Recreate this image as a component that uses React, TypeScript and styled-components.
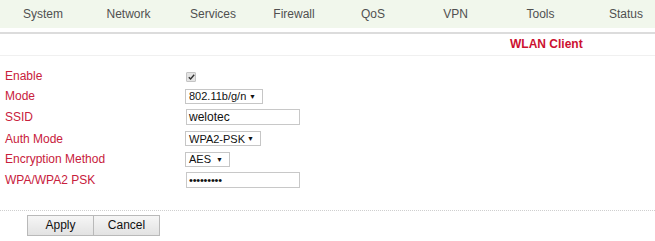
import React from 'react'
import styled, { createGlobalStyle } from 'styled-components'

const Global = createGlobalStyle`
  body {
    margin: 0;
    background: #fff;
    font-family: "Liberation Sans", Arial, sans-serif;
    font-size: 12px;
  }
`

const Page = styled.div`
  width: 655px;
  height: 241px;
  overflow: hidden;
  background: #fff;
`

const NavBar = styled.div`
  display: grid;
  grid-template-columns: 86px 85px 84px 78px 80px 85px 85px 86px;
  height: 28px;
  background: #f1f7ec;
  width: 669px;
`

const NavItem = styled.div`
  text-align: center;
  line-height: 28px;
  color: #505050;
  font-size: 12px;
`

const Rule = styled.div`
  margin-top: 4px;
  height: 2px;
  background: #dcdcdc;
`

const TitleBar = styled.div`
  height: 21px;
  line-height: 21px;
  padding-left: 510px;
  border-bottom: 1px solid #f0f0f0;
  color: #cc1030;
  font-weight: bold;
  font-size: 12px;
`

const Form = styled.div`
  padding-top: 10px;
`

const Row = styled.div<{ $h: number }>`
  display: grid;
  grid-template-columns: 180px 1fr;
  align-items: center;
  padding-left: 5px;
  height: ${p => p.$h}px;
`

const Label = styled.div`
  color: #c8203c;
  font-size: 12px;
`

const Check = styled.span`
  display: inline-flex;
  align-items: center;
  justify-content: center;
  width: 8px;
  height: 8px;
  margin-left: 1px;
  margin-top: -2px;
  background: #e4e4e4;
  border: 1px solid #c4c4c4;
  border-radius: 1px;
`

const Select = styled.div<{ $w: number }>`
  display: flex;
  align-items: center;
  justify-content: space-between;
  box-sizing: border-box;
  width: ${p => p.$w}px;
  height: 15px;
  padding: 0 6px 0 3px;
  border: 1px solid #c6c6c6;
  background: #fff;
  color: #111;
  font-size: 11px;
  white-space: nowrap;
`

const Arrow = styled.span`
  font-size: 7px;
  color: #111;
`

const Input = styled.div`
  box-sizing: border-box;
  width: 114px;
  height: 16px;
  margin-left: 1px;
  padding-left: 2px;
  border: 1px solid #c8c8c8;
  background: #fff;
  color: #111;
  font-size: 12px;
  line-height: 14px;
`

const Dots = styled.span`
  font-size: 11px;
  letter-spacing: -0.2px;
`

const Footer = styled.div`
  margin-top: 19px;
  border-top: 1px dotted #cfcfcf;
  padding: 4px 0 0 27px;
  display: flex;
`

const Button = styled.div`
  box-sizing: border-box;
  width: 67px;
  height: 21px;
  line-height: 19px;
  text-align: center;
  border: 1px solid #b9b9b9;
  background: linear-gradient(#f6f6f6, #e2e2e2);
  color: #111;
  font-size: 12px;
  & + & {
    margin-left: -1px;
  }
`

const navItems = ['System', 'Network', 'Services', 'Firewall', 'QoS', 'VPN', 'Tools', 'Status']

const App: React.FC = () => {
  return (
    <Page>
      <Global />
      <NavBar>
        {navItems.map(n => (
          <NavItem key={n}>{n}</NavItem>
        ))}
      </NavBar>
      <Rule />
      <TitleBar>WLAN Client</TitleBar>

      <Form>
        <Row $h={20}>
          <Label>Enable</Label>
          <div>
            <Check>
              <svg width="7" height="6" viewBox="0 0 7 6">
                <path d="M0.8 3.2 L2.6 5 L6.2 0.8" fill="none" stroke="#333" strokeWidth="1.4" />
              </svg>
            </Check>
          </div>
        </Row>
        <Row $h={20}>
          <Label>Mode</Label>
          <Select $w={78}>
            <span>802.11b/g/n</span>
            <Arrow>▼</Arrow>
          </Select>
        </Row>
        <Row $h={22}>
          <Label>SSID</Label>
          <Input>welotec</Input>
        </Row>
        <Row $h={21}>
          <Label>Auth Mode</Label>
          <Select $w={76}>
            <span>WPA2-PSK</span>
            <Arrow>▼</Arrow>
          </Select>
        </Row>
        <Row $h={20}>
          <Label>Encryption Method</Label>
          <Select $w={45}>
            <span>AES</span>
            <Arrow>▼</Arrow>
          </Select>
        </Row>
        <Row $h={22}>
          <Label>WPA/WPA2 PSK</Label>
          <Input>
            <Dots>•••••••••</Dots>
          </Input>
        </Row>
      </Form>

      <Footer>
        <Button>Apply</Button>
        <Button>Cancel</Button>
      </Footer>
    </Page>
  )
}

export default App
